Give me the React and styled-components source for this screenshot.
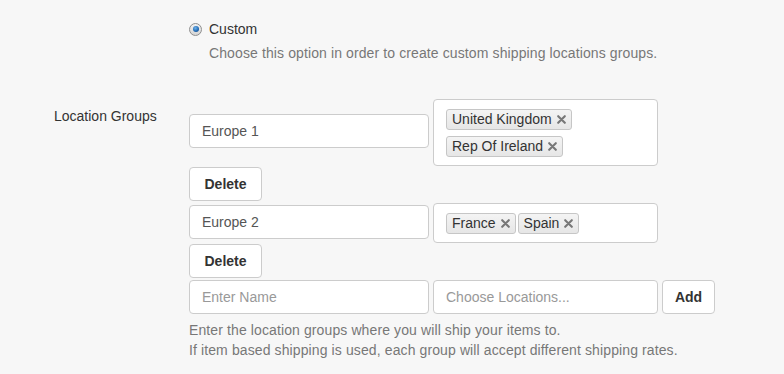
import React from 'react';
import styled, { createGlobalStyle } from 'styled-components';

const GlobalStyle = createGlobalStyle`
  body {
    margin: 0;
    background: #f7f7f7;
    font-family: "Liberation Sans", Arial, sans-serif;
    font-size: 14px;
    color: #333;
  }
`;

const groups = [
  { name: 'Europe 1', locations: ['United Kingdom', 'Rep Of Ireland'] },
  { name: 'Europe 2', locations: ['France', 'Spain'] },
];

const RemoveIcon = () => (
  <svg width="9" height="9" viewBox="0 0 9 9">
    <path d="M1.2 1.2L7.8 7.8M7.8 1.2L1.2 7.8" stroke="#777" strokeWidth="2.1" strokeLinecap="round" />
  </svg>
);

const App = () => {
  return (
    <Page>
      <GlobalStyle />
      <RadioBlock>
        <RadioLine>
          <Radio />
          <span>Custom</span>
        </RadioLine>
        <RadioHelp>
          Choose this option in order to create custom shipping locations groups.
        </RadioHelp>
      </RadioBlock>

      <FormGroup>
        <Label>Location Groups</Label>
        <Fields>
          {groups.map(group => (
            <div key={group.name}>
              <GroupRow>
                <NameInput defaultValue={group.name} />
                <TagBox>
                  {group.locations.map(loc => (
                    <Tag key={loc}>
                      {loc}
                      <TagRemove>
                        <RemoveIcon />
                      </TagRemove>
                    </Tag>
                  ))}
                </TagBox>
              </GroupRow>
              <Button width={73}>Delete</Button>
            </div>
          ))}
          <AddRow>
            <TextInput placeholder="Enter Name" />
            <LocationInput placeholder="Choose Locations..." />
            <Button width={53}>Add</Button>
          </AddRow>
          <HelpText>
            Enter the location groups where you will ship your items to.
            <br />
            If item based shipping is used, each group will accept different shipping rates.
          </HelpText>
        </Fields>
      </FormGroup>
    </Page>
  );
};

export default App;

const Page = styled.div`
  width: 784px;
  height: 374px;
  overflow: hidden;
  padding-top: 19px;
  box-sizing: border-box;
`;

const RadioBlock = styled.div`
  margin-left: 189px;
`;

const RadioLine = styled.label`
  display: flex;
  align-items: center;
  height: 20px;
  line-height: 20px;
  color: #333;
`;

const Radio = styled.span`
  position: relative;
  width: 13px;
  height: 13px;
  margin-right: 7px;
  border-radius: 50%;
  border: 1px solid #8f8f8f;
  background: linear-gradient(#f2f2f2, #d4d4d4);
  box-sizing: border-box;

  &::after {
    content: '';
    position: absolute;
    left: 2.5px;
    top: 2.5px;
    width: 6px;
    height: 6px;
    border-radius: 50%;
    background: radial-gradient(circle at 40% 35%, #6fb2ea, #1f68b3 60%, #143f70);
  }
`;

const RadioHelp = styled.div`
  margin-top: 4px;
  margin-left: 20px;
  line-height: 20px;
  letter-spacing: 0.11px;
  color: #777;
`;

const FormGroup = styled.div`
  display: flex;
  margin-top: 36px;
`;

const Label = styled.div`
  width: 189px;
  padding-left: 54px;
  padding-top: 7px;
  box-sizing: border-box;
  line-height: 20px;
  color: #333;
`;

const Fields = styled.div`
  width: 560px;
`;

const GroupRow = styled.div`
  display: flex;
  align-items: center;
  gap: 4px;
`;

const TextInput = styled.input`
  width: 240px;
  height: 34px;
  padding: 0 12px;
  box-sizing: border-box;
  border: 1px solid #ccc;
  border-radius: 4px;
  background: #fff;
  font-family: inherit;
  font-size: 14px;
  color: #555;
  outline: none;

  &::placeholder {
    color: #999;
  }
`;

const NameInput = styled(TextInput)`
  margin-bottom: 3px;
`;

const LocationInput = styled(TextInput)`
  width: 225px;
`;

const TagBox = styled.div`
  width: 225px;
  display: flex;
  flex-wrap: wrap;
  align-content: flex-start;
  gap: 6px 2px;
  padding: 9px 12px 8px;
  box-sizing: border-box;
  border: 1px solid #ccc;
  border-radius: 4px;
  background: #fff;
`;

const Tag = styled.span`
  display: inline-flex;
  align-items: center;
  height: 21px;
  padding: 0 5px;
  box-sizing: border-box;
  border: 1px solid #c6c6c6;
  border-radius: 3px;
  background: linear-gradient(#f4f4f4, #e6e6e6);
  color: #333;
  line-height: 19px;
`;

const TagRemove = styled.span`
  display: inline-flex;
  margin-left: 5px;
`;

const Button = styled.button`
  width: ${props => props.width}px;
  height: 34px;
  margin: 1px 0 2px;
  padding: 0;
  border: 1px solid #ccc;
  border-radius: 4px;
  background: #fff;
  font-family: inherit;
  font-size: 14px;
  font-weight: 700;
  color: #333;
`;

const AddRow = styled.div`
  display: flex;
  align-items: center;
  gap: 4px;

  ${Button} {
    margin: 0;
  }
`;

const HelpText = styled.div`
  margin-top: 6px;
  line-height: 20px;
  letter-spacing: 0.11px;
  color: #777;
`;
